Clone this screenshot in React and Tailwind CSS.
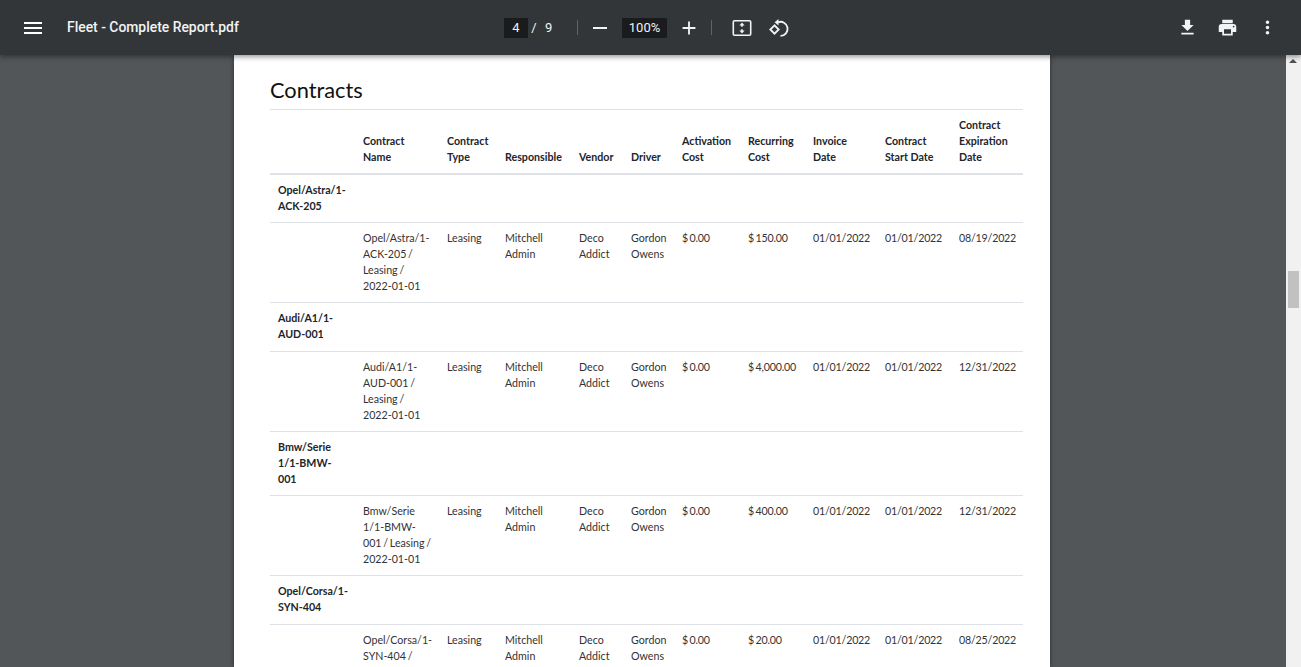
const P = ({ d, cls = "w-6 h-6" }) => (
  <svg viewBox="0 0 24 24" className={cls} fill="currentColor"><path d={d} /></svg>
);

const head = [
  ["", ""],
  ["Contract", "Name"],
  ["Contract", "Type"],
  ["Responsible"],
  ["Vendor"],
  ["Driver"],
  ["Activation", "Cost"],
  ["Recurring", "Cost"],
  ["Invoice", "Date"],
  ["Contract", "Start Date"],
  ["Contract", "Expiration", "Date"],
];

const widths = [85, 84, 58, 74, 52, 51, 66, 65, 72, 74, 72];

const groups = [
  { title: ["Opel/Astra/1-", "ACK-205"], h: "h-[48px]", rh: "h-[80px]", name: ["Opel/Astra/1-", "ACK-205 /", "Leasing /", "2022-01-01"], rec: "$ 150.00", exp: "08/19/2022" },
  { title: ["Audi/A1/1-", "AUD-001"], h: "h-[49px]", rh: "h-[80px]", name: ["Audi/A1/1-", "AUD-001 /", "Leasing /", "2022-01-01"], rec: "$ 4,000.00", exp: "12/31/2022" },
  { title: ["Bmw/Serie", "1/1-BMW-", "001"], h: "h-[64px]", rh: "h-[80px]", name: ["Bmw/Serie", "1/1-BMW-", "001 / Leasing /", "2022-01-01"], rec: "$ 400.00", exp: "12/31/2022" },
  { title: ["Opel/Corsa/1-", "SYN-404"], h: "h-[49px]", rh: "h-[80px]", name: ["Opel/Corsa/1-", "SYN-404 /", "Leasing /", "2022-01-01"], rec: "$ 20.00", exp: "08/25/2022" },
];

const Lines = ({ items }) => items.map((t, i) => <div key={i} className="whitespace-nowrap">{t}</div>);

const Cell = ({ lines, num }) => (
  <td className={"align-top pl-2 pt-[7px] border-b border-[#dee2e6] [word-spacing:-1px]" + (num ? " tracking-[-0.2px]" : "")}>
    <Lines items={lines} />
  </td>
);

export default function App() {
  return (
    <div className="h-[667px] w-[1301px] overflow-hidden flex flex-col bg-[#525659] font-['Roboto',sans-serif]">
      <header className="relative z-10 h-[55px] shrink-0 bg-[#323639] text-white flex items-center shadow-[0_2px_5px_rgba(0,0,0,0.4)]">
        <div className="w-[67px] pl-[21px] shrink-0">
          <P cls="w-6 h-6" d="M3 18h18v-2H3v2zm0-5h18v-2H3v2zm0-7v2h18V6H3z" />
        </div>
        <div className="w-[437px] shrink-0 text-[13.9px] font-medium text-[#f1f3f4]">Fleet - Complete Report.pdf</div>
        <div className="flex items-center text-[13px] text-[#f1f3f4]">
          <div className="w-[24px] h-[20px] bg-[#191b1c] flex items-center justify-center">4</div>
          <span className="w-[12px] text-center">/</span>
          <span className="w-[12px] ml-[5px]">9</span>
          <div className="ml-[20px] w-px h-[15px] bg-[#5f6368]" />
          <div className="ml-[7px] w-[30px] flex justify-center">
            <P cls="w-6 h-6" d="M19 13H5v-2h14v2z" />
          </div>
          <div className="ml-[7px] w-[45px] h-[20px] bg-[#191b1c] flex items-center justify-center">100%</div>
          <div className="ml-[7px] w-[30px] flex justify-center">
            <P cls="w-[22px] h-[22px]" d="M19 13h-6v6h-2v-6H5v-2h6V5h2v6h6v2z" />
          </div>
          <div className="ml-[7px] w-px h-[15px] bg-[#5f6368]" />
          <div className="ml-[15px] w-[30px] flex justify-center">
            <svg viewBox="0 0 24 24" className="w-6 h-6" fill="currentColor">
              <path d="M4.5 4h15A2 2 0 0 1 21.5 6v12a2 2 0 0 1-2 2h-15a2 2 0 0 1-2-2V6a2 2 0 0 1 2-2zm0 1.6a.4.4 0 0 0-.4.4v12c0 .2.2.4.4.4h15c.2 0 .4-.2.4-.4V6a.4.4 0 0 0-.4-.4z" />
              <path d="M12 6.6l2.6 3h-1.8v1.2h-1.6V9.600h-1.800zM12 17.400l-2.600-3h1.800v-1.200h1.600v1.200h1.800z" />
            </svg>
          </div>
          <div className="ml-[6px] w-[30px] flex justify-center">
            <svg viewBox="0 0 24 24" className="w-6 h-6" fill="none" stroke="currentColor" strokeWidth="1.8">
              <path d="M8.500 9.300L4.300 13.500l4.200 4.200 4.200-4.200z" />
              <path d="M12 6.300a7 7 0 1 1 2.500 13.500" />
              <path d="M12.500 3v6.500L8.600 6.300z" fill="currentColor" stroke="none" />
            </svg>
          </div>
        </div>
        <div className="ml-auto flex items-center pr-[23px] gap-[19px] text-[#f1f3f4]">
          <P cls="w-[21px] h-[21px]" d="M19 9h-4V3H9v6H5l7 7 7-7zM5 18v2h14v-2H5z" />
          <P cls="w-[21px] h-[21px]" d="M19 8H5c-1.66 0-3 1.34-3 3v6h4v4h12v-4h4v-6c0-1.66-1.34-3-3-3zm-3 11H8v-5h8v5zm3-7c-.55 0-1-.45-1-1s.45-1 1-1 1 .45 1 1-.45 1-1 1zm-1-9H6v4h12V3z" />
          <P cls="w-[21px] h-[21px]" d="M12 8c1.100 0 2-.9 2-2s-.9-2-2-2-2 .9-2 2 .9 2 2 2zm0 2c-1.100 0-2 .9-2 2s.9 2 2 2 2-.9 2-2-.9-2-2-2zm0 6c-1.100 0-2 .9-2 2s.9 2 2 2 2-.9 2-2-.9-2-2-2z" />
        </div>
      </header>

      <div className="flex flex-1 min-h-0">
        <main className="flex-1 min-w-0 overflow-hidden flex justify-center pr-[2px]">
          <div className="w-[816px] shrink-0 bg-white h-full pl-[36px] pr-[27px] shadow-[0_0_4px_rgba(0,0,0,0.5)] font-['Lato',sans-serif] text-[10.67px] leading-[16px] text-[#212529]">
            <h1 className="text-[21.8px] leading-[27px] pt-[21px] h-[55px] box-border text-[#111] border-b border-[#dee2e6]">Contracts</h1>
            <table className="table-fixed w-[753px] border-collapse">
              <colgroup>
                {widths.map((w, i) => <col key={i} style={{ width: w }} />)}
              </colgroup>
              <thead>
                <tr className="h-[64px]">
                  {head.map((h, i) => (
                    <th key={i} className="align-bottom text-left font-bold pl-2 pb-[8px] border-b-2 border-[#dee2e6]">
                      <Lines items={h} />
                    </th>
                  ))}
                </tr>
              </thead>
              <tbody>
                {groups.map((g, i) => [
                  <tr key={i + "a"} className={g.h}>
                    <td colSpan={11} className="align-top pl-2 pt-[7px] font-bold border-b border-[#dee2e6]">
                      <Lines items={g.title} />
                    </td>
                  </tr>,
                  <tr key={i + "b"} className={g.rh + " text-[#333]"}>
                    <td className="border-b border-[#dee2e6]" />
                    <Cell lines={g.name} />
                    <Cell lines={["Leasing"]} />
                    <Cell lines={["Mitchell", "Admin"]} />
                    <Cell lines={["Deco", "Addict"]} />
                    <Cell lines={["Gordon", "Owens"]} />
                    <Cell num lines={["$ 0.00"]} />
                    <Cell num lines={[g.rec]} />
                    <Cell num lines={["01/01/2022"]} />
                    <Cell num lines={["01/01/2022"]} />
                    <Cell num lines={[g.exp]} />
                  </tr>,
                ])}
              </tbody>
            </table>
          </div>
        </main>
        <aside className="w-[15px] shrink-0 bg-[#f1f1f1] relative">
          <div className="absolute left-[3px] top-[4px] w-0 h-0 border-l-[4px] border-r-[4px] border-b-[4px] border-l-transparent border-r-transparent border-b-[#505050]" />
          <div className="absolute left-[2px] top-[216px] w-[11px] h-[37px] bg-[#c1c1c1]" />
        </aside>
      </div>
    </div>
  );
}
